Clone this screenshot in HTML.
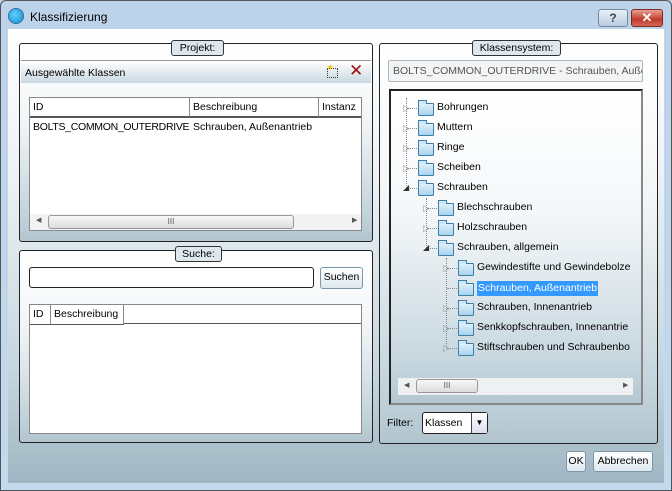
<!DOCTYPE html>
<html><head><meta charset="utf-8"><style>
*{box-sizing:border-box;margin:0;padding:0}
body{width:672px;height:491px;overflow:hidden;font-family:"Liberation Sans",sans-serif;font-size:10.5px;color:#000;background:#b9d1ea;position:relative}
.a{position:absolute}
#frame{left:0;top:0;width:672px;height:491px;background:linear-gradient(#bcd3ea,#c3d9ee);border:1px solid #555;border-radius:6px 6px 0 0}
#body{left:8px;top:29px;width:656px;height:454px;background:linear-gradient(#ffffff 0%,#eef3f6 30%,#c6d6de 75%,#a0b6c2 100%);}
.panel{border:1px solid #222;border-radius:3px;background:linear-gradient(#fff 0%,#f2f5f7 40%,#c4d4dc 85%,#b2c5cf 100%)}
.lbl{border:1px solid #333;border-radius:3px;background:#dfe7ee;text-align:center;line-height:14px;height:16px}
.white{background:#fff;border:1px solid #888}
.hdr{background:#fff;border-right:1px solid #888;border-bottom:2px solid #555;height:20px;line-height:19px;padding-left:3px}
.btn{border:1px solid #7a98a8;border-radius:3px;background:linear-gradient(#fff,#dde8ee);text-align:center;line-height:19px}
.sb{height:16px;background:#f2f2f2}
.thumb{border:1px solid #999;border-radius:3px;background:linear-gradient(#f8f8f8,#dcdcdc);height:14px;top:1px;text-align:center;font-size:8px;line-height:12px;color:#555}
.fold{width:16px;height:13px;border:1px solid #3d7fa6;border-radius:1px;background:linear-gradient(#dff0fb,#a9d3ee)}
.fold:before{content:"";position:absolute;left:-1px;top:-4px;width:7px;height:3px;border:1px solid #3d7fa6;border-bottom:none;background:#cfe7f6}
</style></head><body>
<div class="a" id="frame"></div>
<div class="a" style="left:8px;top:8px;width:16px;height:16px;border-radius:50%;background:radial-gradient(circle at 40% 40%,#5fd0ff,#1a8ad0);border:1px solid #2a6ea0"></div>
<div class="a" style="left:30px;top:10px;font-size:12px">Klassifizierung</div>
<div class="a" style="left:598px;top:9px;width:30px;height:18px;border:1px solid #6f8aa2;border-radius:3px;background:linear-gradient(#e8f0f8,#b8cde0);text-align:center;font-weight:bold;color:#444;line-height:16px;font-size:12px">?</div>
<div class="a" style="left:631px;top:9px;width:32px;height:18px;border:1px solid #7a2a20;border-radius:3px;background:linear-gradient(#e8a094,#c0392b 60%,#d5685a);text-align:center;font-weight:bold;color:#fff;line-height:16px;font-size:13px">✕</div>
<div class="a" id="body"></div>

<div class="a panel" style="left:19px;top:43px;width:354px;height:199px"></div>
<div class="a lbl" style="left:171px;top:40px;width:53px">Projekt:</div>
<div class="a" style="left:21px;top:60px;width:350px;height:23px;background:linear-gradient(#fff,#c8d8e2);border-top:1px solid #999"></div>
<div class="a" style="left:25px;top:67px">Ausgewählte Klassen</div>
<div class="a" style="left:327px;top:68px;width:11px;height:10px;border:1px dotted #333"></div>
<div class="a" style="left:326px;top:63px;color:#e8c000;font-size:10px">✶</div>
<div class="a" style="left:349px;top:62px;color:#a01010;font-size:17px;line-height:17px">✕</div>
<div class="a white" style="left:29px;top:97px;width:333px;height:134px"></div>
<div class="a hdr" style="left:30px;top:98px;width:160px">ID</div>
<div class="a hdr" style="left:190px;top:98px;width:129px">Beschreibung</div>
<div class="a hdr" style="left:319px;top:98px;width:42px;border-right:none">Instanz</div>
<div class="a" style="left:33px;top:121px;letter-spacing:-0.3px">BOLTS_COMMON_OUTERDRIVE</div>
<div class="a" style="left:193px;top:121px">Schrauben, Außenantrieb</div>
<div class="a sb" style="left:30px;top:214px;width:331px"></div>
<div class="a" style="left:36px;top:216px;font-size:7px;color:#555">◀</div>
<div class="a" style="left:352px;top:216px;font-size:7px;color:#555">▶</div>
<div class="a thumb" style="left:48px;top:215px;width:246px">III</div>

<div class="a panel" style="left:19px;top:250px;width:354px;height:193px"></div>
<div class="a lbl" style="left:175px;top:246px;width:47px">Suche:</div>
<div class="a" style="left:29px;top:267px;width:285px;height:21px;border:1px solid #222;border-radius:3px;background:#fff"></div>
<div class="a btn" style="left:320px;top:267px;width:43px;height:22px">Suchen</div>
<div class="a white" style="left:29px;top:304px;width:333px;height:130px"></div>
<div class="a hdr" style="left:30px;top:305px;width:21px;border-bottom:1px solid #555">ID</div>
<div class="a hdr" style="left:51px;top:305px;width:73px;border-bottom:1px solid #555">Beschreibung</div>
<div class="a" style="left:124px;top:305px;width:237px;height:19px;border-bottom:1px solid #555;background:#fff"></div>

<div class="a panel" style="left:379px;top:43px;width:279px;height:401px"></div>
<div class="a lbl" style="left:472px;top:40px;width:89px">Klassensystem:</div>
<div class="a" style="left:388px;top:60px;width:255px;height:22px;border:1px solid #b0b8bf;border-radius:2px;background:#f2f4f6;line-height:20px;padding-left:4px;color:#555;overflow:hidden;white-space:nowrap">BOLTS_COMMON_OUTERDRIVE - Schrauben, Außen</div>
<div class="a" style="left:389px;top:89px;width:254px;height:316px;border:2px solid #222;border-color:#222 #888 #888 #222;background:linear-gradient(#fff 0%,#f4f7f9 40%,#c8d8e0 85%,#b4c7d1 100%)"></div>
<div class="a" style="left:406px;top:98px;height:90px;border-left:1px dotted #888"></div>
<div class="a" style="left:426px;top:198px;height:50px;border-left:1px dotted #888"></div>
<div class="a" style="left:446px;top:258px;height:90px;border-left:1px dotted #888"></div>
<div id="tree"></div>
<div class="a sb" style="left:398px;top:378px;width:235px;height:17px;background:#eef0f1"></div>
<div class="a" style="left:404px;top:381px;font-size:7px;color:#555">◀</div>
<div class="a" style="left:623px;top:381px;font-size:7px;color:#555">▶</div>
<div class="a thumb" style="left:416px;top:379px;width:62px">III</div>

<div class="a" style="left:387px;top:417px">Filter:</div>
<div class="a" style="left:422px;top:412px;width:66px;height:22px;border:1px solid #222;border-radius:3px;background:#fff;line-height:20px;padding-left:2px">Klassen</div>
<div class="a" style="left:471px;top:413px;width:16px;height:20px;border-left:1px solid #444;background:linear-gradient(#fff,#dde);text-align:center;font-size:8px;line-height:20px">▼</div>

<div class="a btn" style="left:566px;top:451px;width:20px;height:21px">OK</div>
<div class="a btn" style="left:593px;top:451px;width:60px;height:21px">Abbrechen</div>

<script>
var items=[[0,"Bohrungen",1],[0,"Muttern",1],[0,"Ringe",1],[0,"Scheiben",1],[0,"Schrauben",2],[1,"Blechschrauben",1],[1,"Holzschrauben",1],[1,"Schrauben, allgemein",2],[2,"Gewindestifte und Gewindebolze",1],[2,"Schrauben, Außenantrieb",0],[2,"Schrauben, Innenantrieb",1],[2,"Senkkopfschrauben, Innenantrie",1],[2,"Stiftschrauben und Schraubenbo",1]];
var h="";
items.forEach(function(it,i){var y=98+i*20,x=403+it[0]*20;
h+='<div class="a" style="left:'+(x+4)+'px;top:'+(y+10)+'px;width:12px;border-top:1px dotted #888"></div>';
if(it[2]==1)h+='<div class="a" style="left:'+x+'px;top:'+(y+5)+'px;color:#999;font-size:9px">▷</div>';
if(it[2]==2)h+='<div class="a" style="left:'+x+'px;top:'+(y+5)+'px;color:#333;font-size:8px">◢</div>';
h+='<div class="a fold" style="left:'+(x+15)+'px;top:'+(y+5)+'px"></div>';
var hl=it[2]==0?'background:#3399ff;color:#fff;padding:0 1px;height:15px;line-height:15px;top:'+(y+3)+'px;':'top:'+(y+3)+'px;';
h+='<div class="a" style="left:'+(x+34)+'px;'+hl+'white-space:nowrap;max-width:'+(632-x-34)+'px;overflow:hidden">'+it[1]+'</div>';});
document.getElementById("tree").innerHTML=h;
</script>
</body></html>
